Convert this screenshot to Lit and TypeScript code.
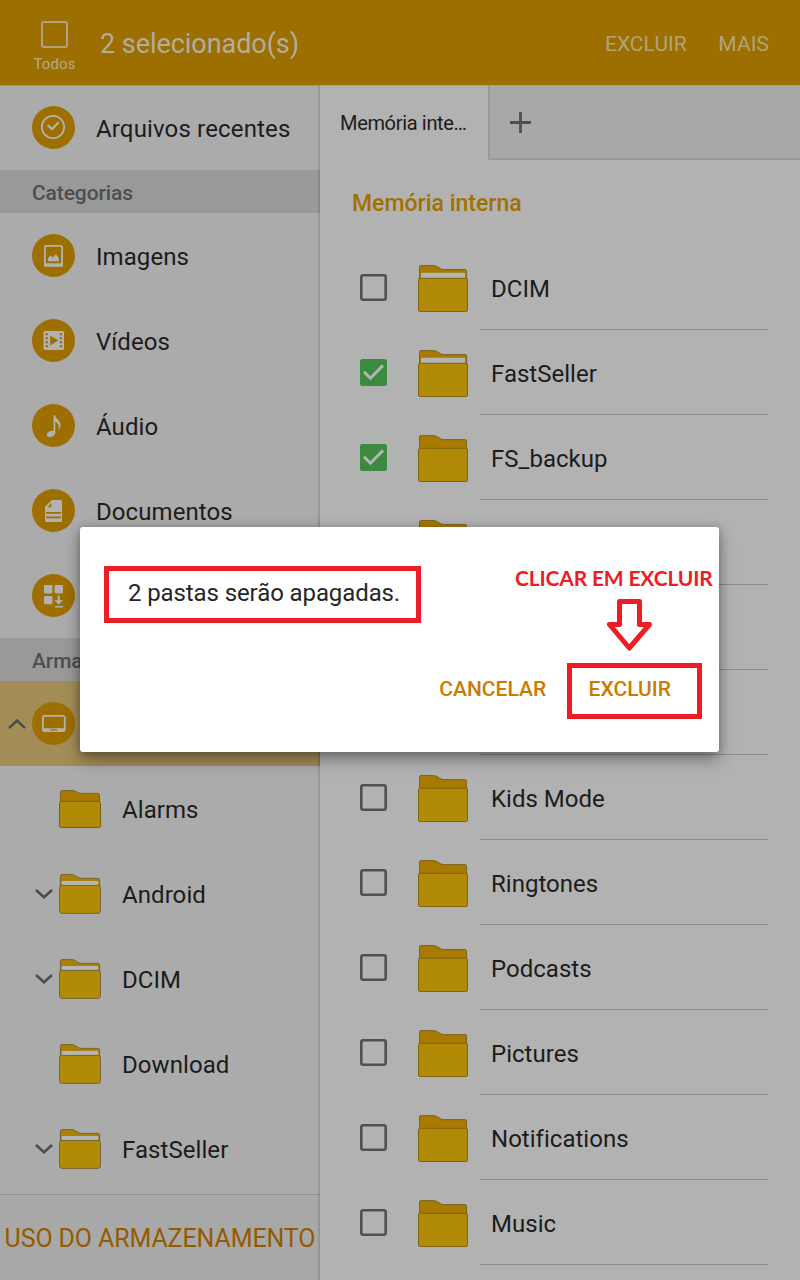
import { LitElement, html, svg, css, nothing } from "lit";
import { customElement } from "lit/decorators.js";
import { classMap } from "lit/directives/class-map.js";

type Entry = { name: string; checked?: boolean; filled?: boolean };
type TreeEntry = { name: string; expandable?: boolean; filled?: boolean };

const FILES: Entry[] = [
  { name: "DCIM", filled: true },
  { name: "FastSeller", checked: true, filled: true },
  { name: "FS_backup", checked: true },
  { name: "Alarms" },
  { name: "Android", filled: true },
  { name: "Download", filled: true },
  { name: "Kids Mode" },
  { name: "Ringtones" },
  { name: "Podcasts" },
  { name: "Pictures" },
  { name: "Notifications" },
  { name: "Music" },
];

const TREE: TreeEntry[] = [
  { name: "Alarms" },
  { name: "Android", expandable: true, filled: true },
  { name: "DCIM", expandable: true, filled: true },
  { name: "Download", filled: true },
  { name: "FastSeller", expandable: true, filled: true },
];

/* Glyphs are drawn inside a 43x43 disc. */
const GLYPHS = {
  recent: svg`<circle cx="21" cy="21" r="11.2" fill="none" stroke="#b2b2b2" stroke-width="1.7"/>
    <path d="M15.5 19 L20 23.2 L26.7 16.2" fill="none" stroke="#b2b2b2" stroke-width="2.3"/>`,
  image: svg`<rect x="12.9" y="11.9" width="17.2" height="20" rx="1" fill="none" stroke="#b2b2b2" stroke-width="1.8"/>
    <path d="M12.5 29.3h18v3h-18z" fill="#b2b2b2"/>
    <path d="M16 27.2 V24 L18.6 21.5 L20.6 23.4 L23.8 20.3 L26.8 23.7 V27.2Z" fill="#b2b2b2"/>`,
  video: svg`<rect x="11.5" y="12" width="20.5" height="19" rx="1.5" fill="#b2b2b2"/>
    <path d="M18.2 16.5 L26.2 21.5 L18.2 26.5Z" fill="#9d6e00"/>
    <path d="M13.5 14.2h2.4v2h-2.4zM13.5 18.2h2.4v2h-2.4zM13.5 22.2h2.4v2h-2.4zM13.5 26.2h2.4v2h-2.4zM27.7 14.2h2.4v2h-2.4zM27.7 18.2h2.4v2h-2.4zM27.7 22.2h2.4v2h-2.4zM27.7 26.2h2.4v2h-2.4z" fill="#9d6e00"/>`,
  audio: svg`<path d="M21.6 11.2 H23.2 C23.6 15.4 29.8 16.6 28.4 22.4 Q27.8 24.8 26.2 25.8 Q28.6 20.2 23.3 17.8 V28.6 C23.3 31.4 20.4 33.1 17.8 33.1 C14.6 33 14.1 30.2 15.8 28.4 Q18 26.3 21.6 27Z" fill="#b2b2b2"/>`,
  doc: svg`<path d="M19.8 11 H28.5 Q30 11 30 12.5 V31.5 Q30 33 28.5 33 H14.5 Q13 33 13 31.5 V17.4Z" fill="#b2b2b2"/>
    <path d="M15.3 18.2 L19.4 14.1 V18.2Z" fill="#9d6e00"/>
    <path d="M14 23h15v1.8h-15zM14 27.5h15v1.8h-15z" fill="#9d6e00"/>`,
  apps: svg`<rect x="12" y="11" width="8.4" height="8.4" rx="1.3" fill="#b2b2b2"/>
    <rect x="22.6" y="11" width="8.4" height="8.4" rx="1.3" fill="#b2b2b2"/>
    <rect x="12" y="21.9" width="8.4" height="8.4" rx="1.3" fill="#b2b2b2"/>
    <path d="M25.7 21.5h2v4.8h3.2l-4.2 4.2-4.2-4.2h3.2zM23 32h8v1.4h-8z" fill="#b2b2b2"/>`,
  device: svg`<rect x="10.9" y="13.9" width="21.8" height="14.6" rx="1.4" fill="none" stroke="#b2b2b2" stroke-width="1.8"/>
    <path d="M10.5 26.2h22.6v2.2q0 1.5-1.5 1.5H12q-1.5 0-1.5-1.5z" fill="#b2b2b2"/>
    <path d="M18.2 27.3h7v1.3h-7z" fill="#9d6e00"/>`,
};

const disc = (name: keyof typeof GLYPHS) => html`
  <svg class="disc" viewBox="0 0 43 43">
    <circle cx="21.5" cy="21.5" r="21.5" fill="#9d6e00" />
    ${GLYPHS[name]}
  </svg>`;

const bigFolder = (filled = false) => html`
  <svg class="folder" viewBox="0 0 50 47">
    <path d="M1.5 15 V2 Q1.5 .6 3 .6 H15.5 Q17.5 .6 19.5 1.8 L22.3 3.6 Q24 4.6 26 4.6 H47 Q48.6 4.6 48.6 6.2 V15Z"
      fill="#a97a00" stroke="#7c6426" stroke-width="1" />
    ${filled ? svg`<path d="M3 13.5 V8.8 Q3 7.8 4 7.8 H46 Q47 7.8 47 8.8 V13.5Z" fill="#b4b4b4"/>` : nothing}
    <rect x=".5" y="13.3" width="49" height="33.2" rx="1.4" fill="#b18a07" stroke="#7f630e" stroke-width="1" />
  </svg>`;

const smallFolder = (filled = false) => filled
  ? html`<svg class="folder-sm" viewBox="0 0 42 40">
      <path d="M1.4 12 V2.2 Q1.4 .6 3 .6 H12.5 Q14.5 .6 16.5 1.8 L18.5 3.1 Q20.3 4.4 22 4.4 H39 Q40.6 4.4 40.6 6 V12Z"
        fill="#a98109" stroke="#776433" stroke-width="1" />
      <path d="M2.8 11 V8 Q2.8 7.1 3.7 7.1 H38.3 Q39.2 7.1 39.2 8 V11Z" fill="#b6b6b6" />
      <rect x=".5" y="11.4" width="41" height="28" rx="2.6" fill="#b18b07" stroke="#77663a" stroke-width="1" />
    </svg>`
  : html`<svg class="folder-sm" viewBox="0 0 42 40">
      <path d="M1.4 13 V3.2 Q1.4 1.6 3 1.6 H13.5 Q15.5 1.6 17.5 2.8 L18.5 3.4 Q20.3 4.4 22 4.4 H39 Q40.6 4.4 40.6 6 V13Z"
        fill="#a97a00" stroke="#7c6426" stroke-width="1" />
      <rect x=".5" y="12.3" width="41" height="26.2" rx="1.8" fill="#b18b07" stroke="#776010" stroke-width="1" />
    </svg>`;

const chevron = (up = false) => html`
  <svg class="chevron" viewBox="0 0 18 10">
    <path d=${up ? "M1 9 L9 1.6 L17 9" : "M1 1 L9 8.2 L17 1"} fill="none" stroke="#4c4c4c" stroke-width="2.5" />
  </svg>`;

const checkbox = (checked = false) => html`
  <svg class="check" viewBox="0 0 27 27">
    ${checked
      ? svg`<rect width="27" height="27" rx="2.5" fill="#3b8a40"/>
          <path d="M4 12.8 L10.4 19.2 L23 6.4" fill="none" stroke="#b4b4b4" stroke-width="3"/>`
      : svg`<rect x="1.3" y="1.3" width="24.4" height="24.4" rx="2" fill="none" stroke="#505050" stroke-width="2.6"/>`}
  </svg>`;

@customElement("app-root")
export class AppRoot extends LitElement {
  static styles = css`
    :host {
      display: block;
      position: relative;
      width: 800px;
      height: 1280px;
      overflow: hidden;
      background: #b2b2b2;
      color: #1c1c1c;
      font-family: Roboto, "Liberation Sans", sans-serif;
      font-size: 24px;
      line-height: 30px;
      white-space: nowrap;
    }
    * { box-sizing: border-box; }
    svg { display: block; flex: none; }
    .page { display: grid; grid-template-rows: 85px 1195px; height: 100%; }
    .bar { display: flex; align-items: flex-start; background: #9d6e00; padding-right: 31px; }
    .all { display: flex; flex-direction: column; align-items: center; width: 109px; padding-top: 21px; gap: 7px;
      font-size: 15px; line-height: 18px; letter-spacing: 0.1px; color: #b3a98c; }
    .all-box { width: 27px; height: 27px; border: 2px solid #b2a27f; border-radius: 3px; }
    .title { flex: 1; margin-left: -9px; padding-top: 28px; font-size: 27px; line-height: 32px; letter-spacing: -0.05px; color: #b3ada0; }
    .action { font-size: 21px; line-height: 26px; padding-top: 31px; margin-left: 31.5px; letter-spacing: 0.06px; color: #b2a477; }
    .body { display: grid; grid-template-columns: 320px 480px; min-height: 0; }
    .side { display: flex; flex-direction: column; background: #ababab; overflow: hidden; border-top: 1px solid #979797;
      position: relative; }
    .side::after { content: ""; position: absolute; top: 0; right: 0; bottom: 0; width: 3px;
      background: linear-gradient(90deg, rgba(0, 0, 0, 0), rgba(0, 0, 0, 0.17)); }
    .nav { display: flex; align-items: center; height: 85px; flex: none; padding-left: 32px; gap: 21px; }
    .nav.first { height: 84px; padding-bottom: 1px; }
    .label { padding-top: 2px; letter-spacing: 0.07px; }
    .nav.first .label { letter-spacing: 0.15px; }
    .disc { width: 43px; height: 43px; }
    .section { height: 43px; flex: none; background: #999; color: #4e4e4e; font-size: 21px; font-weight: 500;
      line-height: 46px; padding-left: 32px; letter-spacing: -0.1px; }
    .nav.active { background: #a38d57; padding-left: 8px; gap: 6px; }
    .chevron { width: 18px; height: 10px; }
    .tree { flex: 1; min-height: 0; overflow: hidden; }
    .node { display: flex; align-items: center; height: 85px; padding-left: 35px; }
    .slot { width: 24px; }
    .folder-sm { width: 42px; height: 40px; margin-top: 1px; }
    .node .label { margin-left: 21px; }
    .usage { height: 86px; flex: none; border-top: 1px solid #959595; background: #a8a8a8; color: #945a00;
      text-align: center; line-height: 88px; font-size: 25px; letter-spacing: -0.12px; }
    .main { display: flex; flex-direction: column; overflow: hidden; }
    .tabs { display: flex; height: 75px; flex: none; border-top: 1px solid #a2a2a2; }
    .tab { width: 168px; padding: 23px 0 0 20px; font-size: 20px; line-height: 28px; letter-spacing: -0.33px; }
    .rest { flex: 1; background: #a8a8a8; border-left: 2px solid #999; border-bottom: 2px solid #999; padding: 26px 0 0 20px; }
    .plus { width: 21px; height: 21px; }
    .path { height: 85px; flex: none; padding: 29px 0 0 32px; font-size: 23px; font-weight: 500; color: #a17100; }
    .row { display: flex; align-items: center; height: 85px; flex: none; padding: 0 32px 0 40px; }
    .check { width: 27px; height: 27px; }
    .folder { width: 50px; height: 47px; margin: 2px 12px 0 31px; }
    .cell { flex: 1; height: 85px; border-bottom: 1px solid #8c8c8c; padding-left: 11px; line-height: 88px; letter-spacing: 0.02px; }
    .dialog { position: absolute; left: 80px; top: 527px; width: 639px; height: 225px; background: #fff; border-radius: 3px;
      box-shadow: 0 8px 16px rgba(0, 0, 0, 0.34), 0 0 8px rgba(0, 0, 0, 0.22); color: #262626;
      display: flex; flex-direction: column; justify-content: space-between; padding: 51px 48px 50px; }
    .message { letter-spacing: -0.1px; }
    .buttons { display: flex; justify-content: flex-end; gap: 42.5px; font-size: 21px; line-height: 26px; font-weight: 500; color: #cc7a00; }
    .mark { position: absolute; border: 5px solid #ee1c24; }
    .mark-message { left: 104px; top: 566px; width: 317px; height: 57px; }
    .mark-confirm { left: 567px; top: 663px; width: 135px; height: 56px; }
    .note { position: absolute; left: 515px; top: 564px; font-family: Lato, sans-serif; font-weight: 700; font-size: 21px;
      line-height: 28px; letter-spacing: -0.17px; color: #ee1c24; }
    .arrow { position: absolute; left: 607px; top: 599px; width: 45px; height: 52px; }
  `;

  render() {
    return html`
      <div class="page">
        <header class="bar">
          <div class="all"><span class="all-box"></span><span>Todos</span></div>
          <div class="title">2 selecionado(s)</div>
          <div class="action">EXCLUIR</div>
          <div class="action">MAIS</div>
        </header>
        <div class="body">
          <nav class="side">
            <div class="nav first">${disc("recent")}<span class="label">Arquivos recentes</span></div>
            <div class="section">Categorias</div>
            <div class="nav">${disc("image")}<span class="label">Imagens</span></div>
            <div class="nav">${disc("video")}<span class="label">Vídeos</span></div>
            <div class="nav">${disc("audio")}<span class="label">Áudio</span></div>
            <div class="nav">${disc("doc")}<span class="label">Documentos</span></div>
            <div class="nav">${disc("apps")}</div>
            <div class="section">Armazenamento</div>
            <div class=${classMap({ nav: true, active: true })}>${chevron(true)}${disc("device")}</div>
            <div class="tree">
              ${TREE.map((n) => html`
                <div class="node">
                  <div class="slot">${n.expandable ? chevron() : nothing}</div>
                  ${smallFolder(n.filled)}
                  <span class="label">${n.name}</span>
                </div>`)}
            </div>
            <div class="usage">USO DO ARMAZENAMENTO</div>
          </nav>
          <main class="main">
            <div class="tabs">
              <div class="tab">Memória inte…</div>
              <div class="rest">
                <svg class="plus" viewBox="0 0 21 21"><path d="M0 10.5H21M10.5 0V21" stroke="#505050" stroke-width="2.8" /></svg>
              </div>
            </div>
            <div class="path">Memória interna</div>
            ${FILES.map((f) => html`
              <div class="row">${checkbox(f.checked)}${bigFolder(f.filled)}<div class="cell">${f.name}</div></div>`)}
          </main>
        </div>
      </div>
      <div class="dialog">
        <div class="message">2 pastas serão apagadas.</div>
        <div class="buttons"><span>CANCELAR</span><span>EXCLUIR</span></div>
      </div>
      <div class="mark mark-message"></div>
      <div class="mark mark-confirm"></div>
      <div class="note">CLICAR EM EXCLUIR</div>
      <svg class="arrow" viewBox="0 0 45 52">
        <path d="M12.5 2.5 H32.5 V25.5 H42.5 L22.3 49 L2.5 25.5 H12.5Z" fill="none" stroke="#ee1c24" stroke-width="5" stroke-linejoin="round" />
      </svg>
    `;
  }
}
